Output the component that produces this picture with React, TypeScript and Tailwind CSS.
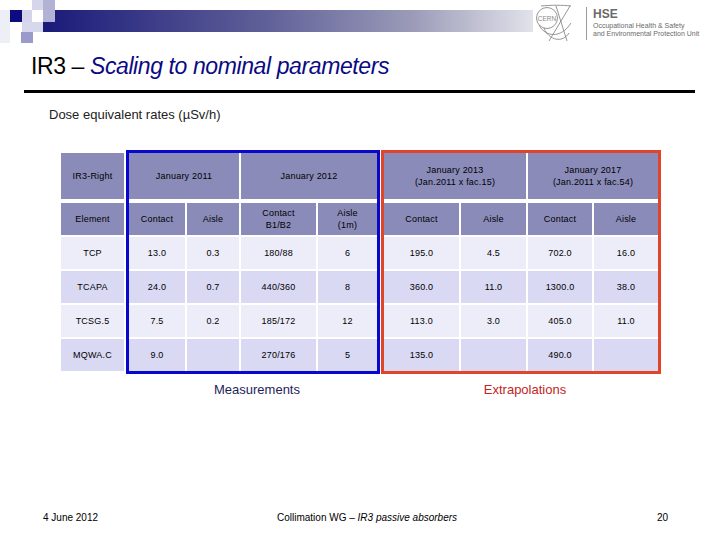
import React from "react";

const HEAD = "bg-[#8b8bb9]";
const LIGHT = "bg-[#ededfa]";
const DARK = "bg-[#d9d9f4]";

function Cell({ children, cls }: { children?: React.ReactNode; cls: string }) {
  return (
    <div className={`flex items-center justify-center text-center text-[9px] leading-[12px] tracking-[0.2px] text-black ${cls}`}>
      {children}
    </div>
  );
}

const rows = [
  ["TCP", "13.0", "0.3", "180/88", "6", "195.0", "4.5", "702.0", "16.0"],
  ["TCAPA", "24.0", "0.7", "440/360", "8", "360.0", "11.0", "1300.0", "38.0"],
  ["TCSG.5", "7.5", "0.2", "185/172", "12", "113.0", "3.0", "405.0", "11.0"],
  ["MQWA.C", "9.0", "", "270/176", "5", "135.0", "", "490.0", ""],
];

function Banner() {
  return (
    <svg width="533" height="44" viewBox="0 0 533 44">
      <defs>
        <linearGradient id="bar" x1="0" x2="1" y1="0" y2="0">
          <stop offset="0" stopColor="#1a1a7a" />
          <stop offset="0.45" stopColor="#5f5f98" />
          <stop offset="0.75" stopColor="#9a9ab8" />
          <stop offset="1" stopColor="#e2e2ea" />
        </linearGradient>
      </defs>
      <rect x="43" y="10" width="490" height="22" fill="url(#bar)" />
      <rect x="0" y="10" width="10" height="33" fill="#eeeef6" />
      <rect x="32" y="0" width="11" height="10" fill="#d6d6ea" />
      <rect x="43" y="0" width="12" height="22" fill="#b2b2d4" />
      <rect x="22" y="10" width="10" height="12" fill="#d4d4ea" />
      <rect x="22" y="22" width="21" height="10" fill="#d8d8ec" />
      <rect x="10" y="10" width="12" height="12" fill="#0c0c80" />
      <rect x="21" y="32" width="12" height="11" fill="#9a9acb" />
    </svg>
  );
}

function CernLogo() {
  return (
    <svg width="38" height="40" viewBox="0 0 38 40" fill="none" stroke="#8a8a8a" strokeWidth="0.9">
      <circle cx="12" cy="15" r="10.5" />
      <text x="12" y="17.5" fontSize="6.5" fill="#8a8a8a" stroke="none" textAnchor="middle" fontFamily="Liberation Sans, Arial, sans-serif">CERN</text>
      <path d="M6 3 C 16 2, 28 2, 36 3" />
      <path d="M21 3 L 32 38" />
      <path d="M35 3 L 14 38" />
      <path d="M9 25 C 14 38, 28 40, 34 30" />
      <path d="M4 22 C 10 34, 26 36, 36 20" />
    </svg>
  );
}

export default function App() {
  return (
    <div className="w-[720px] h-[540px] bg-white flex flex-col overflow-hidden font-['Liberation_Sans',Arial,sans-serif]">
      {/* top band */}
      <div className="flex h-[48px] items-start">
        <Banner />
        <div className="ml-[2px] mt-[3px]">
          <CernLogo />
        </div>
        <div className="ml-[13px] mt-[7px] w-px h-[33px] bg-[#9a9a9a]" />
        <div className="ml-[6px] mt-[8px] flex flex-col text-[#6a6a6a]">
          <div className="text-[12px] leading-[13px] font-semibold">HSE</div>
          <div className="text-[7px] leading-[8px] mt-[1px]">Occupational Health &amp; Safety</div>
          <div className="text-[7px] leading-[8px]">and Environmental Protection Unit</div>
        </div>
      </div>

      {/* title */}
      <div className="ml-[31px] mt-[5px] text-[23px] leading-[26px] tracking-[-0.4px] text-black">
        IR3 – <span className="italic text-[#0a0a84]">Scaling to nominal parameters</span>
      </div>
      <div className="ml-[24px] mt-[11px] w-[671px] h-[3px] bg-black" />

      <div className="ml-[49px] mt-[14px] text-[13px] leading-[15px] text-[#222]">Dose equivalent rates (µSv/h)</div>

      {/* table */}
      <div className="flex items-start ml-[61px] mt-[28px]">
        {/* first column */}
        <div className="mt-[3px] w-[63px] flex flex-col">
          <Cell cls={`${HEAD} h-[46px]`}>IR3-Right</Cell>
          <div className="mt-[4px] grid grid-cols-1 grid-rows-[32px_32px_32px_32px_32px] gap-[2px]">
            <Cell cls={HEAD}>Element</Cell>
            {rows.map((r, i) => (
              <Cell key={i} cls={i % 2 === 0 ? LIGHT : DARK}>{r[0]}</Cell>
            ))}
          </div>
        </div>

        {/* measurements */}
        <div className="ml-[2px] border-[3px] border-[#0808cc] flex flex-col">
          <div className="grid grid-cols-[110px_136px] gap-x-[2px] h-[46px]">
            <Cell cls={HEAD}>January 2011</Cell>
            <Cell cls={HEAD}>January 2012</Cell>
          </div>
          <div className="mt-[4px] grid grid-cols-[56px_52px_75px_59px] grid-rows-[32px_32px_32px_32px_32px] gap-[2px]">
            <Cell cls={HEAD}>Contact</Cell>
            <Cell cls={HEAD}>Aisle</Cell>
            <Cell cls={HEAD}>
              Contact
              <br />
              B1/B2
            </Cell>
            <Cell cls={HEAD}>
              Aisle
              <br />
              (1m)
            </Cell>
            {rows.map((r, i) =>
              r.slice(1, 5).map((v, j) => (
                <Cell key={`${i}-${j}`} cls={i % 2 === 0 ? LIGHT : DARK}>{v}</Cell>
              ))
            )}
          </div>
        </div>

        {/* extrapolations */}
        <div className="ml-[1px] border-[3px] border-[#e0442a] flex flex-col">
          <div className="grid grid-cols-[142px_130px] gap-x-[2px] h-[46px]">
            <Cell cls={HEAD}>
              January 2013
              <br />
              (Jan.2011 x fac.15)
            </Cell>
            <Cell cls={HEAD}>
              January 2017
              <br />
              (Jan.2011 x fac.54)
            </Cell>
          </div>
          <div className="mt-[4px] grid grid-cols-[75px_65px_64px_64px] grid-rows-[32px_32px_32px_32px_32px] gap-[2px]">
            <Cell cls={HEAD}>Contact</Cell>
            <Cell cls={HEAD}>Aisle</Cell>
            <Cell cls={HEAD}>Contact</Cell>
            <Cell cls={HEAD}>Aisle</Cell>
            {rows.map((r, i) =>
              r.slice(5, 9).map((v, j) => (
                <Cell key={`${i}-${j}`} cls={i % 2 === 0 ? LIGHT : DARK}>{v}</Cell>
              ))
            )}
          </div>
        </div>
      </div>

      {/* labels */}
      <div className="flex mt-[8px] text-[13px] leading-[15px]">
        <div className="ml-[126px] w-[262px] text-center text-[#1e1e5a]">Measurements</div>
        <div className="w-[274px] text-center text-[#c4241e]">Extrapolations</div>
      </div>

      {/* footer */}
      <div className="mt-auto mb-[16px] flex text-[10px] leading-[12px] text-black">
        <div className="w-[277px] pl-[43px]">4 June 2012</div>
        <div>
          Collimation WG – <span className="italic">IR3 passive absorbers</span>
        </div>
        <div className="flex-1 text-right pr-[52px]">20</div>
      </div>
    </div>
  );
}
